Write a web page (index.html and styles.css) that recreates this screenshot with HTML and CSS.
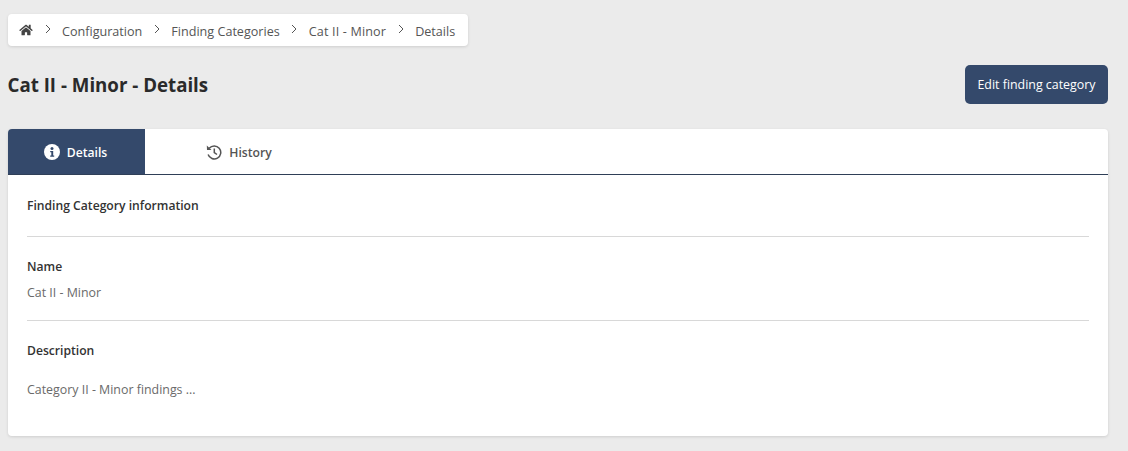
FILE: index.html
```html
<!DOCTYPE html>
<html lang="en">
<head>
<meta charset="utf-8">
<title>Cat II - Minor - Details</title>
<link rel="stylesheet" href="styles.css">
</head>
<body>
<nav class="crumbs">
  <svg class="home" viewBox="0 0 576 512" width="14" height="12"><path fill="#444" d="M280 148 96 300v164c0 9 7 16 16 16l112-.3c9 0 16-7 16-16V368c0-9 7-16 16-16h64c9 0 16 7 16 16v95.600c0 9 7 16 16 16l112 .4c9 0 16-7 16-16V300L295 148c-4-3-11-3-15 0zm292 103-84-69V44c0-7-5-12-12-12h-56c-7 0-12 5-12 12v73l-89-74c-18-14-43-14-61 0L4 251c-5 4-6 12-2 17l26 31c4 5 12 6 17 2L280 107c4-3 11-3 15 0l235 194c5 4 13 3 17-2l26-31c4-5 3-13-1-17z"/></svg>
  <span class="sep"><svg viewBox="0 0 8 10" width="8" height="10"><path d="M2 1l4 4-4 4" fill="none" stroke="#555" stroke-width="1"/></svg></span>
  <span>Configuration</span>
  <span class="sep"><svg viewBox="0 0 8 10" width="8" height="10"><path d="M2 1l4 4-4 4" fill="none" stroke="#555" stroke-width="1"/></svg></span>
  <span>Finding Categories</span>
  <span class="sep"><svg viewBox="0 0 8 10" width="8" height="10"><path d="M2 1l4 4-4 4" fill="none" stroke="#555" stroke-width="1"/></svg></span>
  <span class="cat">Cat II - Minor</span>
  <span class="sep"><svg viewBox="0 0 8 10" width="8" height="10"><path d="M2 1l4 4-4 4" fill="none" stroke="#555" stroke-width="1"/></svg></span>
  <span>Details</span>
</nav>
<header class="head">
  <h1>Cat II - Minor - Details</h1>
  <button class="btn">Edit finding category</button>
</header>
<main class="card">
  <div class="tabs">
    <div class="tab active">
      <svg viewBox="0 0 16 16" width="16" height="16"><circle cx="8" cy="8" r="8" fill="#fff"/><circle cx="8" cy="4.600" r="1.500" fill="#34496b"/><path d="M6.200 7h3v4.500h1v1.300H6.200v-1.300h1.100V8.300H6.200z" fill="#34496b"/></svg>
      <span>Details</span>
    </div>
    <div class="tab">
      <svg viewBox="0 0 16 16" width="16" height="16"><path d="M3.200 4.300A6.500 6.500 0 1 1 2.100 10.500" fill="none" stroke="#555" stroke-width="1.500"/><path d="M.8 1.500 1 6h4.500z" fill="#555"/><path d="M8.300 4.500v4l2.700 2" fill="none" stroke="#555" stroke-width="1.500"/></svg>
      <span>History</span>
    </div>
  </div>
  <div class="body">
    <section class="row first"><h2>Finding Category information</h2></section>
    <section class="row name"><h2>Name</h2><p>Cat II - Minor</p></section>
    <section class="row desc"><h2>Description</h2><p>Category II - Minor findings ...</p></section>
  </div>
</main>
</body>
</html>
```
FILE: styles.css
```css
* { box-sizing: border-box; }
html, body { margin: 0; height: 100%; }
body {
  background: #ebebeb;
  padding: 14px 20px 0 8px;
  font-family: "Open Sans", "Noto Sans", sans-serif;
  font-size: 12.6px;
  color: #555;
  overflow: hidden;
}
.crumbs {
  display: inline-flex;
  align-items: center;
  height: 32px;
  padding: 3px 13px 0 11px;
  background: #fff;
  border-radius: 4px;
  box-shadow: 0 1px 3px rgba(0,0,0,.12);
  font-weight: 500;
  vertical-align: top;
}
.home { margin-top: -3px; }
.sep { display: inline-flex; width: 29px; justify-content: center; position: relative; top: -3px; }
.sep svg { display: block; }
.cat { letter-spacing: .15px; }
.head {
  display: flex;
  justify-content: space-between;
  align-items: center;
  margin-top: 19px;
  height: 39px;
}
h1 { margin: 0 0 0 -.5px; font-size: 18.7px; font-weight: 700; color: #2a2a2a; }
.btn {
  height: 39px;
  width: 143px;
  padding: 0;
  background: #34496b;
  border: 0;
  border-radius: 5px;
  color: #fff;
  font: 500 12.4px "Open Sans", sans-serif;
}
.card {
  margin-top: 25px;
  height: 307px;
  background: #fff;
  border-radius: 4px;
  box-shadow: 0 1px 3px rgba(0,0,0,.12);
}
.tabs { display: flex; height: 46px; border-bottom: 1px solid #2f3f57; }
.tab {
  width: 137px;
  height: 45px;
  display: flex;
  align-items: center;
  justify-content: center;
  gap: 7px;
  padding-top: 1px;
  font-size: 12.2px;
  font-weight: 600;
  color: #555;
}
.tab svg { margin-top: -1px; }
.tab.active { padding-right: 2px; }
.tab + .tab { width: 188px; }
.tab.active { background: #34496b; color: #fff; border-top-left-radius: 4px; }
.body { padding: 0 19px; }
.row { border-bottom: 1px solid #d8d8d8; }
.row:last-child { border-bottom: 0; }
.first { height: 62px; padding-top: 22px; }
.name { height: 84px; padding-top: 21px; }
.desc { padding-top: 21px; }
h2 { margin: 0; font-size: 12.15px; line-height: 17px; font-weight: 600; color: #333; }
p { margin: 0; font-size: 12.4px; line-height: 17px; color: #6a6a6a; }
.name p { margin-top: 9px; }
.desc p { margin-top: 22px; }
```
